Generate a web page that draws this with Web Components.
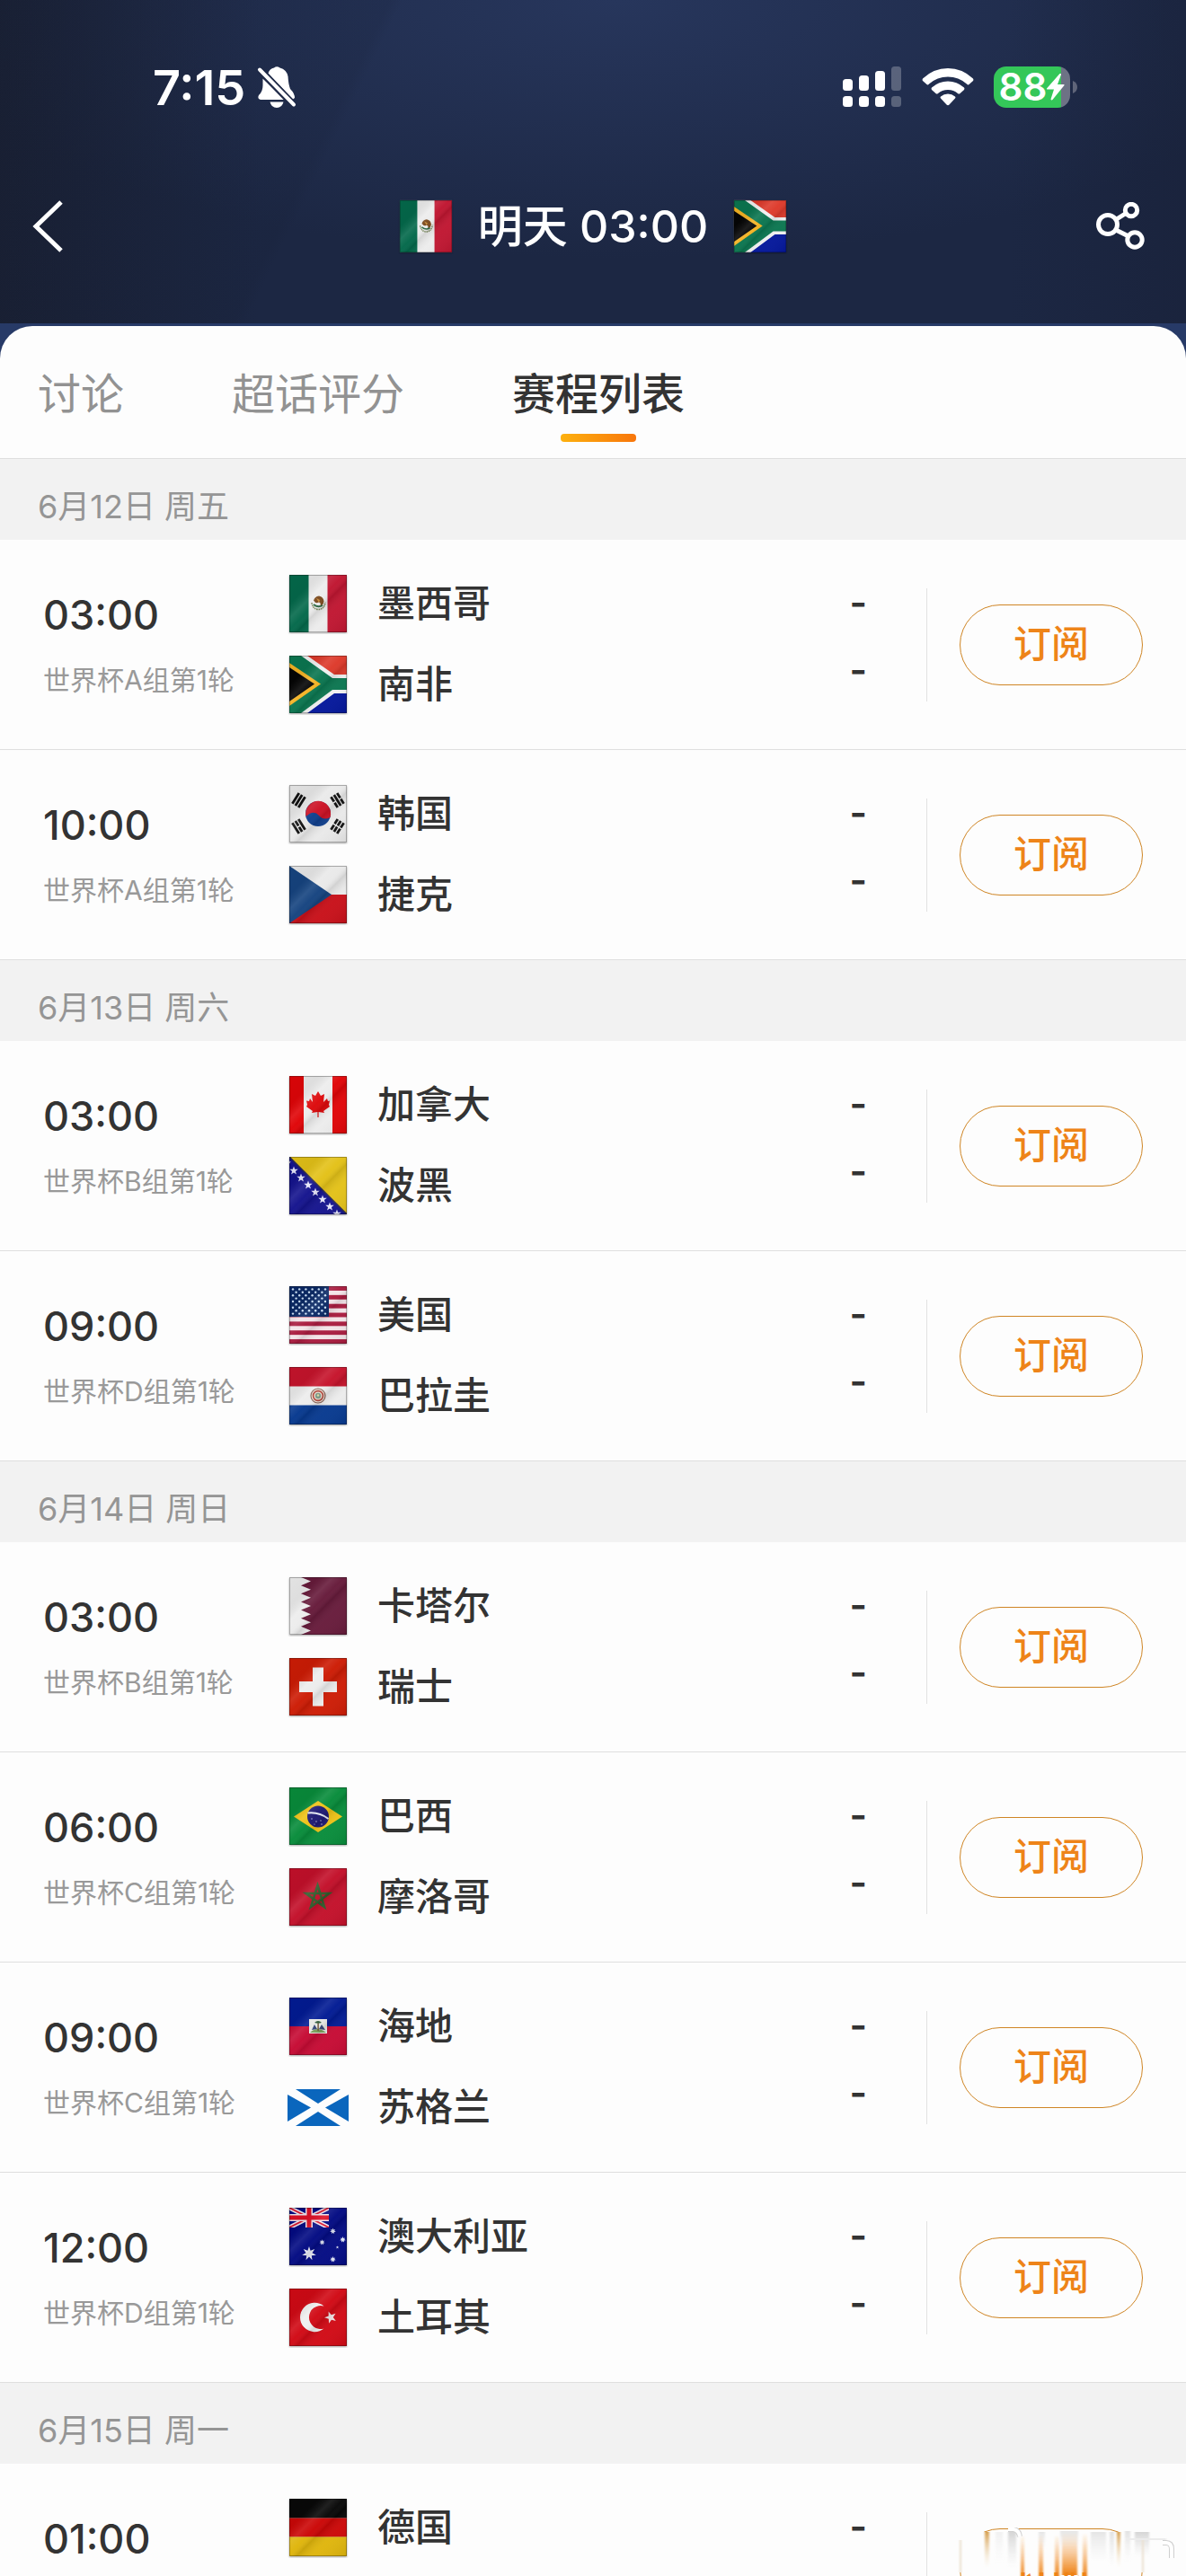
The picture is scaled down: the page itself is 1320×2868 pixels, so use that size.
<!DOCTYPE html>
<html lang="zh-CN">
<head>
<meta charset="utf-8">
<meta name="viewport" content="width=device-width, initial-scale=1">
<title>赛程列表</title>
<style>
  body {
    margin: 0;
    height: 100vh;
    overflow: hidden;
    background: #fdfdfd;
    color: #333;
    font-family: Inter, "Noto Sans CJK SC", sans-serif;
  }
</style>
</head>
<body>
<match-page>
  <status-bar slot="header" time="7:15" battery="88"></status-bar>
  <nav-bar slot="header" home="mx" away="za">明天 03:00</nav-bar>

  <tab-bar slot="tabs">
    <tab-item>讨论</tab-item>
    <tab-item>超话评分</tab-item>
    <tab-item selected>赛程列表</tab-item>
  </tab-bar>

  <day-group>
    <span slot="date">6月12日 周五</span>
    <match-row time="03:00" round="世界杯A组第1轮">
      <team-line flag="mx">墨西哥</team-line>
      <team-line flag="za">南非</team-line>
    </match-row>
    <match-row time="10:00" round="世界杯A组第1轮">
      <team-line flag="kr">韩国</team-line>
      <team-line flag="cz">捷克</team-line>
    </match-row>
  </day-group>

  <day-group>
    <span slot="date">6月13日 周六</span>
    <match-row time="03:00" round="世界杯B组第1轮">
      <team-line flag="ca">加拿大</team-line>
      <team-line flag="ba">波黑</team-line>
    </match-row>
    <match-row time="09:00" round="世界杯D组第1轮">
      <team-line flag="us">美国</team-line>
      <team-line flag="py">巴拉圭</team-line>
    </match-row>
  </day-group>

  <day-group>
    <span slot="date">6月14日 周日</span>
    <match-row time="03:00" round="世界杯B组第1轮">
      <team-line flag="qa">卡塔尔</team-line>
      <team-line flag="ch">瑞士</team-line>
    </match-row>
    <match-row time="06:00" round="世界杯C组第1轮">
      <team-line flag="br">巴西</team-line>
      <team-line flag="ma">摩洛哥</team-line>
    </match-row>
    <match-row time="09:00" round="世界杯C组第1轮">
      <team-line flag="ht">海地</team-line>
      <team-line flag="sco">苏格兰</team-line>
    </match-row>
    <match-row time="12:00" round="世界杯D组第1轮">
      <team-line flag="au">澳大利亚</team-line>
      <team-line flag="tr">土耳其</team-line>
    </match-row>
  </day-group>

  <day-group>
    <span slot="date">6月15日 周一</span>
    <match-row time="01:00" smeared>
      <team-line flag="de">德国</team-line>
    </match-row>
  </day-group>
</match-page>

<script>
// Points of a star polygon with n tips
function star(cx, cy, r, fill, n = 5, inner = 0.4) {
  let points = [];
  for (let i = 0; i < n * 2; i++) {
    let radius = i % 2 ? r * inner : r;
    let angle = Math.PI * i / n - Math.PI / 2;
    points.push((cx + radius * Math.cos(angle)).toFixed(2) + ',' + (cy + radius * Math.sin(angle)).toFixed(2));
  }
  return `<polygon points="${points.join(' ')}" fill="${fill}"/>`;
}

function rect(x, y, w, h, fill) {
  return `<rect x="${x}" y="${y}" width="${w}" height="${h}" fill="${fill}"/>`;
}

// Three bars; a 0 in the pattern is a broken bar
function trigram(cx, cy, angle, pattern) {
  let bars = pattern.map((solid, i) => {
    let y = (i - 1) * 4 - 1.4;
    return solid ? rect(-7, y, 14, 2.8, '#111') : rect(-7, y, 6.4, 2.8, '#111') + rect(0.8, y, 6.2, 2.8, '#111');
  });
  return `<g transform="translate(${cx} ${cy}) rotate(${angle})">${bars.join('')}</g>`;
}

function usFlag() {
  let out = rect(0, 0, 64, 64, '#f3e4e8');
  for (let i = 0; i < 13; i += 2) {
    out += rect(0, i * 64 / 13, 64, 64 / 13, '#a91c3f');
  }
  out += rect(0, 0, 44, 34, '#0c2a66');
  for (let row = 0; row < 9; row++) {
    for (let col = 0; col < (row % 2 ? 5 : 6); col++) {
      out += `<circle cx="${4 + col * 7.2 + (row % 2 ? 3.6 : 0)}" cy="${3.4 + row * 3.4}" r="1.2" fill="#cfe4fa"/>`;
    }
  }
  return out;
}

function qatarFlag() {
  let teeth = 'M13,0';
  for (let i = 0; i < 7; i++) {
    teeth += `L24,${(i * 64 / 7 + 4.57).toFixed(2)}L13,${((i + 1) * 64 / 7).toFixed(2)}`;
  }
  return rect(0, 0, 64, 64, '#671b3b') + `<path d="M0,0${teeth.replace('M', 'L')}L0,64Z" fill="#ececec"/>`;
}

function bosniaFlag() {
  let out = rect(0, 0, 64, 64, '#15148e') + '<path d="M0,0H64V64Z" fill="#e3c118"/><path d="M0,0L64,64" stroke="#2b2a55" stroke-width="1.6"/>';
  for (let i = 0; i < 7; i++) {
    out += star(5 + i * 8, 15.4 + i * 8, 5, '#e6e6fa');
  }
  return out + star(0, 6, 2, '#e6e6fa');
}

// Artwork on a 64x64 canvas
const FLAGS = {
  mx: rect(0, 0, 64, 64, '#ececec') + rect(0, 0, 21.5, 64, '#04694b') + rect(42.5, 0, 21.5, 64, '#c01631') +
    `<path d="M25,31q1,7 7,7.500q7,0 8-8" fill="none" stroke="#7c8b5d" stroke-width="1.6" stroke-dasharray="1.6 .7"/>
    <path d="M27,29q1,-5 6,-5.500q5,1 5.500,6q-1,5 -4,5q1,-4 -2,-4q-3,2 -5,-1.500z" fill="#7b4a1e"/>
    <path d="M30,26l4,2l-1,3z" fill="#c98d3c"/><path d="M27,33q5,4 10,1" stroke="#2f6a44" stroke-width="1.8" fill="none"/>`,
  za: rect(0, 0, 64, 32, '#dd3a2b') + rect(0, 32, 64, 32, '#04179b') +
    `<path d="M0,0H20L50,21H64V42H50L20,64H0Z" fill="#f0f0f0"/>
    <path d="M0,0H13L48,25H64V38H48L13,64H0Z" fill="#0b7650"/>
    <path d="M0,8L35,31.500L0,56Z" fill="#f4b324"/><path d="M0,13L28,31.500L0,51Z" fill="#050505"/>`,
  kr: rect(0, 0, 64, 64, '#e9e9e9') +
    `<circle cx="32" cy="32" r="14" fill="#0f3f8d"/>
    <path d="M18.500,35A14,14 0 1 1 45.500,36Q38,40 33,34Q27,27 18.500,35Z" fill="#cc1225"/>` +
    trigram(10.5, 17, -58, [1, 1, 1]) + trigram(53.5, 17, 58, [0, 1, 0]) +
    trigram(10.5, 46, 58, [1, 0, 1]) + trigram(53.5, 46, -58, [0, 0, 0]),
  cz: rect(0, 0, 64, 32, '#e9e9e9') + rect(0, 32, 64, 32, '#c81019') + '<path d="M0,0L47,32L0,64Z" fill="#164480"/>',
  ca: rect(0, 0, 64, 64, '#ececec') + rect(0, 0, 16, 64, '#e00508') + rect(48, 0, 16, 64, '#e00508') +
    '<path d="M32,17L35,22L39,20L38,29L42,25L43,28L45,27.500L44,32L45,34L38,39L39,41L32.600,40V46H31.400V40L25,41L26,39L19,34L20,32L19,27.500L22,28L23,25L26,29L25,20L29,22Z" fill="#dd0a0c"/>',
  ba: bosniaFlag(),
  us: usFlag(),
  py: rect(0, 0, 64, 64, '#ececec') + rect(0, 0, 64, 21.5, '#c6142c') + rect(0, 42.5, 64, 21.5, '#07398f') +
    `<circle cx="32" cy="32" r="8" fill="#e9ddd3" stroke="#8b6458" stroke-width="1.2"/>
    <circle cx="32" cy="32" r="5.400" fill="none" stroke="#b1483c" stroke-width="1.6"/>
    <circle cx="32" cy="32" r="3.200" fill="#7d9a87"/><circle cx="32" cy="31.500" r="1.200" fill="#ded9a0"/>`,
  qa: qatarFlag(),
  ch: rect(0, 0, 64, 64, '#cd1c05') + rect(26, 10.5, 12, 43, '#ececec') + rect(11, 26, 42, 12, '#ececec'),
  br: rect(0, 0, 64, 64, '#088c3b') +
    `<path d="M5,32.500L32,15L59,32.500L32,50Z" fill="#eec216"/><circle cx="32" cy="32.500" r="12" fill="#1e1a74"/>
    <path d="M20.500,28.500Q33,27 43.500,35" fill="none" stroke="#e5e9f3" stroke-width="1.8"/>
    <g fill="#c5c8e6"><circle cx="25" cy="35" r=".7"/><circle cx="30" cy="38" r=".7"/><circle cx="35" cy="37" r=".7"/><circle cx="28" cy="41" r=".6"/><circle cx="36" cy="41" r=".7"/></g>`,
  ma: rect(0, 0, 64, 64, '#c3102a') +
    '<path d="M31.500,19L39,43L18.500,28H44.500L24,43Z" fill="none" stroke="#315c2c" stroke-width="2.600"/>',
  ht: rect(0, 0, 64, 32, '#021b94') + rect(0, 32, 64, 32, '#c60b34') + rect(22, 24, 20, 16, '#e7e8e4') +
    `<path d="M23,39q8,-8 18,0z" fill="#7da25c"/><path d="M25,36l3,-6l3,5zM33,35l3,-5l4,6z" fill="#364779"/>
    <path d="M31.400,27h1.400v10h-1.400z" fill="#6a4f2f"/><path d="M28,28q4,-4 8,0q-4,1 -8,0z" fill="#2f5a38"/>`,
  // the Scottish one is wide and flat, with no gloss
  sco: rect(-2, 12, 68, 41, '#0a66bd') +
    '<path d="M-2,12h9L32,28L57,12h9v6L40,32.500L66,48v5h-9L32,37L7,53h-9v-5L24,32.500L-2,18Z" fill="#fdfdfd"/>',
  au: rect(0, 0, 64, 64, '#030b83') +
    `<clipPath id="canton"><rect width="44" height="22"/></clipPath>
    <g clip-path="url(#canton)">
      <path d="M0,0L44,22M44,0L0,22" stroke="#efe5ee" stroke-width="5"/><path d="M0,0L44,22M44,0L0,22" stroke="#d81630" stroke-width="1.800"/>
      <path d="M22,0V22M0,11H44" stroke="#efe5ee" stroke-width="8"/><path d="M22,0V22M0,11H44" stroke="#de1026" stroke-width="5"/>
    </g>` +
    star(22, 51, 8, '#e9ecf7', 7, 0.45) + star(48.5, 26, 3.4, '#dfe4f5', 7, 0.5) + star(36.5, 38.5, 3.2, '#dfe4f5', 7, 0.5) +
    star(59.5, 35.5, 3.4, '#dfe4f5', 7, 0.5) + star(53.5, 44, 1.8, '#dfe4f5') + star(48.5, 57.5, 3.4, '#dfe4f5', 7, 0.5),
  tr: rect(0, 0, 64, 64, '#d10a15') +
    '<path d="M38.500,19.500A16.200,16.200 0 1 0 38.500,44.500A13,13 0 1 1 38.500,19.500Z" fill="#efefef"/>' +
    `<g transform="rotate(-20 46 32)">${star(46, 32, 7, '#efe3e4')}</g>`,
  de: rect(0, 0, 64, 21.5, '#080808') + rect(0, 21.5, 64, 21, '#cb0707') + rect(0, 42.5, 64, 21.5, '#dfb50c')
};

// Base class: renders its markup into an open shadow root
class BaseElement extends HTMLElement {
  constructor() {
    super(); // compulsory
    this.attachShadow({mode: 'open'});
  }
  connectedCallback() {
    this.shadowRoot.innerHTML = this.render();
  }
}

customElements.define('nation-flag',
  class extends BaseElement {
    render() {
      let code = this.getAttribute('code');
      let gloss = code === 'sco' ? '' : `
        <rect width="64" height="64" fill="url(#gloss)"/>
        <rect x=".5" y=".5" width="63" height="63" fill="none" stroke="#000" stroke-opacity=".28"/>`;
      return `
      <style>
      :host { display: block; width: 68px; flex: none; }
      svg { display: block; width: 100%; }
      .cloth { filter: drop-shadow(0 1px 1px rgba(0, 0, 0, .35)); }
      </style>
      <svg viewBox="-2 -2 68 68" aria-hidden="true">
        <defs>
          <linearGradient id="gloss" x1="0" y1="0" x2="1" y2="1">
            <stop offset="0" stop-color="#000" stop-opacity=".04"/>
            <stop offset=".25" stop-color="#000" stop-opacity=".06"/>
            <stop offset=".38" stop-color="#fff" stop-opacity=".1"/>
            <stop offset=".48" stop-color="#fff" stop-opacity=".02"/>
            <stop offset=".56" stop-color="#000" stop-opacity=".1"/>
            <stop offset=".7" stop-color="#fff" stop-opacity=".03"/>
            <stop offset="1" stop-color="#000" stop-opacity=".08"/>
          </linearGradient>
          <clipPath id="edge"><rect x="-2" y="0" width="68" height="64"/></clipPath>
          <clipPath id="square"><rect width="64" height="64"/></clipPath>
        </defs>
        <g class="${code === 'sco' ? '' : 'cloth'}"><g clip-path="url(#${code === 'sco' ? 'edge' : 'square'})">${FLAGS[code] || ''}${gloss}</g></g>
      </svg>`;
    }
  }
);

customElements.define('status-bar',
  class extends BaseElement {
    render() {
      return `
      <style>
      :host {
        display: flex;
        align-items: center;
        justify-content: space-between;
        height: 64px;
        padding: 65px 120px 0 170px;
        color: #fff;
      }
      .side { display: flex; align-items: center; }
      .clock { padding-top: 2px; font-size: 54px; line-height: 64px; font-weight: 600; margin-right: 13px; }
      svg { display: block; }
      .signal { margin-right: 22px; }
      .wifi { margin-right: 22px; }
      .battery {
        display: flex;
        align-items: center;
        justify-content: center;
        box-sizing: border-box;
        width: 85px;
        height: 46px;
        border-radius: 14px;
        background: linear-gradient(90deg, #34c759 88%, #6d7285 88%);
        font-size: 42px;
        line-height: 46px;
        font-weight: 600;
      }
      .nub { margin-left: 3px; }
      </style>
      <div class="side">
        <span class="clock">${this.getAttribute('time')}</span>
        <svg width="44" height="48" viewBox="0 0 44 48" fill="#fff" aria-hidden="true">
          <path d="M12.500,8.500Q14,3.500 19,2.500Q22,0 25.500,2.500Q33,4.500 34.500,12Q35,21 37,26Q42,31 42,36L40,37.500Z"/>
          <path d="M6.500,14.500L32,38H4Q0,37 2,33Q6.500,29 6.500,22Z"/>
          <path d="M14.500,40.500H29.500Q28,47 22,47Q16,47 14.500,40.500Z"/>
          <path d="M3,5L41,44" stroke="#1f2a48" stroke-width="8"/>
          <path d="M3,4.500L41,43.500" stroke="#fff" stroke-width="4" stroke-linecap="round"/>
        </svg>
      </div>
      <div class="side">
        <svg class="signal" width="66" height="46" viewBox="0 0 66 46" fill="#fff" aria-hidden="true">
          <rect x="0" y="14" width="11" height="13" rx="3.500"/><rect x="0" y="33" width="11" height="12" rx="3.500"/>
          <rect x="18" y="10" width="11" height="17" rx="3.500"/><rect x="18" y="33" width="11" height="12" rx="3.500"/>
          <rect x="36" y="5" width="11" height="22" rx="3.500"/><rect x="36" y="33" width="11" height="12" rx="3.500"/>
          <g opacity=".25"><rect x="54" y="0" width="11" height="27" rx="3.500"/><rect x="54" y="33" width="11" height="12" rx="3.500"/></g>
        </svg>
        <svg class="wifi" width="58" height="44" viewBox="0 0 58 44" fill="#fff" aria-hidden="true">
          <path d="M29,1Q45,1 57,12.500Q58,14 57,15L52.500,19Q51.500,20 50,18.500Q41,10.500 29,10.500Q17,10.500 8,18.500Q6.500,20 5.500,19L1,15Q0,14 1,12.500Q13,1 29,1Z"/>
          <path d="M29,15.500Q39,15.500 47,22.500Q48,23.500 47,25L42.500,29Q41.500,30 40,29Q35.500,25 29,25Q22.500,25 18,29Q16.500,30 15.500,29L11,25Q10,23.500 11,22.500Q19,15.500 29,15.500Z"/>
          <path d="M29,29.500Q33.500,29.500 37,32.500Q38,33.500 37,34.500L30.500,41.500Q29,43 27.500,41.500L21,34.500Q20,33.500 21,32.500Q24.500,29.500 29,29.500Z"/>
        </svg>
        <div class="battery">${this.getAttribute('battery')}<svg width="20" height="30" viewBox="0 0 20 30" fill="#fff" aria-hidden="true">
          <path d="M14.500,0L0,16.500Q-.5,17.500 1,17.500H8L4.500,28.500Q5,30 6.500,29L19.500,13Q20,12 19,12H12L16,1Q16,-1 14.500,0Z"/>
        </svg></div>
        <svg class="nub" width="6" height="14" viewBox="0 0 6 14" aria-hidden="true"><path d="M0,0Q5,2 5,7Q5,12 0,14Z" fill="#5f6579"/></svg>
      </div>`;
    }
  }
);

customElements.define('nav-bar',
  class extends BaseElement {
    render() {
      return `
      <style>
      :host {
        display: grid;
        grid-template-columns: 1fr auto 1fr;
        align-items: center;
        padding: 91px 36px 0 36px;
        color: #fff;
      }
      .title {
        display: flex;
        align-items: center;
        gap: 27px;
        margin: 0;
        font-size: 50px;
        line-height: 64px;
        font-weight: 500;
      }
      nation-flag { width: 62px; }
      button { display: block; border: 0; padding: 0; background: none; color: inherit; }
      .share { justify-self: end; margin-right: 10px; }
      svg { display: block; }
      </style>
      <button class="back" aria-label="返回">
        <svg width="36" height="60" viewBox="0 0 36 60" fill="none" stroke="#fff" stroke-width="5"><path d="M32,3L4,30L32,57"/></svg>
      </button>
      <h1 class="title">
        <nation-flag code="${this.getAttribute('home')}"></nation-flag>
        <slot></slot>
        <nation-flag code="${this.getAttribute('away')}"></nation-flag>
      </h1>
      <button class="share" aria-label="分享">
        <svg width="54" height="54" viewBox="0 0 54 54" fill="none" stroke="#fff" stroke-width="5">
          <circle cx="13" cy="25" r="10.500"/><circle cx="39" cy="9" r="6.700"/><circle cx="43" cy="42" r="8.200"/>
          <path d="M22,19.500L33,12.500M22,31L36,38"/>
        </svg>
      </button>`;
    }
  }
);

customElements.define('tab-item',
  class extends BaseElement {
    render() {
      return `
      <style>
      :host { display: block; }
      button {
        display: flex;
        flex-direction: column;
        align-items: center;
        gap: 12px;
        border: 0;
        padding: 0;
        background: none;
        font: inherit;
        font-size: 48px;
        line-height: 64px;
        color: #929292;
      }
      button::after { content: ""; width: 84px; height: 9px; border-radius: 4px; }
      :host([selected]) button { color: #333; font-weight: 500; }
      :host([selected]) button::after { background: linear-gradient(90deg, #fdb10f, #f8760b); }
      </style>
      <button role="tab" aria-selected="${this.hasAttribute('selected')}"><slot></slot></button>`;
    }
  }
);

customElements.define('tab-bar',
  class extends BaseElement {
    render() {
      return `
      <style>
      :host {
        display: flex;
        gap: 120px;
        padding: 44px 42px 18px 42px;
        border-bottom: 1px solid #dedede;
      }
      </style>
      <slot></slot>`;
    }
  }
);

customElements.define('team-line',
  class extends BaseElement {
    render() {
      return `
      <style>
      :host {
        display: flex;
        align-items: center;
        gap: 32px;
        font-size: 42px;
        line-height: 68px;
        font-weight: 500;
      }
      </style>
      <nation-flag code="${this.getAttribute('flag')}"></nation-flag>
      <span><slot></slot></span>`;
    }
  }
);

// Washed-out vertical streaks over the button that sits at the foot of the screen
const STREAKS = `
  <svg class="streaks" width="260" height="56" viewBox="0 0 260 56" aria-hidden="true">
    <defs>
      <linearGradient id="o" x1="0" y1="0" x2="0" y2="1"><stop offset="0" stop-color="#f08a22" stop-opacity="0"/><stop offset=".5" stop-color="#f08a22" stop-opacity=".45"/><stop offset="1" stop-color="#ee8218"/></linearGradient>
      <linearGradient id="g" x1="0" y1="0" x2="0" y2="1"><stop offset="0" stop-color="#bbb" stop-opacity=".6"/><stop offset="1" stop-color="#ddd" stop-opacity="0"/></linearGradient>
      <linearGradient id="y" x1="0" y1="0" x2="0" y2="1"><stop offset="0" stop-color="#d6a050"/><stop offset="1" stop-color="#f3e3c8" stop-opacity="0"/></linearGradient>
      <filter id="soft"><feGaussianBlur stdDeviation="1 0"/></filter>
    </defs>
    <path d="M0,0H34V5H200V0H260V40H218V50H8V40H0Z" fill="#fdfdfd"/>
    <g filter="url(#soft)">
      <rect x="40" y="5" width="5" height="40" fill="url(#y)"/>
      <rect x="52" y="5" width="8" height="36" fill="url(#g)" opacity=".3"/>
      <rect x="66" y="5" width="9" height="40" fill="url(#g)"/>
      <rect x="100" y="5" width="7" height="20" fill="url(#g)" opacity=".6"/>
      <rect x="80" y="8" width="4" height="48" fill="url(#o)"/>
      <rect x="100" y="8" width="5" height="48" fill="url(#o)"/>
      <rect x="118" y="8" width="5" height="48" fill="url(#o)"/>
      <rect x="126" y="5" width="17" height="48" fill="url(#o)"/>
      <rect x="149" y="6" width="5" height="50" fill="url(#o)"/>
      <rect x="124" y="4" width="20" height="20" fill="url(#g)" opacity=".6"/>
      <rect x="158" y="5" width="17" height="34" fill="url(#g)" opacity=".6"/>
      <rect x="179" y="5" width="5" height="40" fill="url(#g)" opacity=".7"/>
      <rect x="187" y="5" width="4" height="40" fill="url(#y)"/>
      <rect x="196" y="4" width="6" height="34" fill="url(#g)" opacity=".7"/>
      <rect x="207" y="5" width="16" height="28" fill="url(#g)"/>
      <rect x="12" y="14" width="2" height="36" fill="#eadfcf"/>
      <rect x="215" y="14" width="2" height="36" fill="#eadfcf"/>
      <rect x="196" y="12" width="46" height="2" fill="#ececec"/>
    </g>
    <path d="M66,2h6q6,1 7,8M238,17h4q6,0 6,7v10" fill="none" stroke="#cfcfcf" stroke-width="6"/>
    <path d="M66,2h6q6,1 7,8M238,17h4q6,0 6,8v9" fill="none" stroke="#fff" stroke-width="4"/>
  </svg>`;

customElements.define('match-row',
  class extends BaseElement {
    render() {
      let scores = [...this.querySelectorAll('team-line')].map(() => '<span>-</span>').join('');
      return `
      <style>
      :host {
        display: grid;
        grid-template-columns: 272px 1fr auto auto auto;
        box-sizing: border-box;
        height: 234px;
        padding: 0 48px;
        border-bottom: 1px solid #dfdfdf;
      }
      .info { padding-top: 56px; }
      time { display: block; font-size: 45px; line-height: 56px; font-weight: 500; }
      .round { margin-top: 26px; font-size: 30px; line-height: 36px; color: #999; }
      .teams { display: flex; flex-direction: column; gap: 22px; padding-top: 37px; }
      .scores {
        display: flex;
        flex-direction: column;
        padding-top: 32px;
        margin-right: 66px;
        font-size: 42px;
        line-height: 75px;
        font-weight: 600;
      }
      .divider { align-self: center; width: 1px; height: 126px; background: #e2e2e2; }
      .action { position: relative; align-self: center; margin-left: 36px; }
      button {
        display: block;
        box-sizing: border-box;
        width: 204px;
        height: 90px;
        border: 1px solid #cf8524;
        border-radius: 45px;
        padding: 0 0 2px 0;
        background: none;
        font: inherit;
        font-size: 42px;
        line-height: 60px;
        font-weight: 500;
        color: #ee8419;
      }
      .streaks { position: absolute; top: -1px; left: -12px; }
      </style>
      <div class="info">
        <time>${this.getAttribute('time')}</time>
        <div class="round">${this.getAttribute('round') || ''}</div>
      </div>
      <div class="teams"><slot></slot></div>
      <div class="scores">${scores}</div>
      <div class="divider"></div>
      <div class="action"><button>订阅</button>${this.hasAttribute('smeared') ? STREAKS : ''}</div>`;
    }
  }
);

customElements.define('day-group',
  class extends BaseElement {
    render() {
      return `
      <style>
      :host { display: block; }
      header {
        box-sizing: border-box;
        height: 90px;
        padding: 29px 42px 0 42px;
        background: #f2f2f2;
        font-size: 36px;
        line-height: 48px;
        color: #959595;
      }
      </style>
      <header><slot name="date"></slot></header>
      <slot></slot>`;
    }
  }
);

customElements.define('match-page',
  class extends BaseElement {
    render() {
      return `
      <style>
      :host {
        display: flex;
        flex-direction: column;
        height: 100vh;
        background: #273a67;
      }
      .top {
        flex: none;
        box-sizing: border-box;
        height: 360px;
        background:
          linear-gradient(116deg, rgba(20, 28, 48, .12) 29%, transparent 30%),
          linear-gradient(90deg, rgba(24, 29, 45, .7), transparent 22%, transparent 85%, rgba(24, 32, 55, .5)),
          radial-gradient(ellipse 60% 80% at 52% 0, #27365c, transparent),
          #1c2743;
      }
      .sheet {
        flex: 1;
        display: flex;
        flex-direction: column;
        min-height: 0;
        margin-top: 3px;
        border-radius: 36px 36px 0 0;
        background: #fdfdfd;
        overflow: hidden;
      }
      .list { flex: 1; overflow-y: auto; scrollbar-width: none; }
      </style>
      <div class="top"><slot name="header"></slot></div>
      <main class="sheet">
        <slot name="tabs"></slot>
        <div class="list"><slot></slot></div>
      </main>`;
    }
  }
);
</script>
</body>
</html>
